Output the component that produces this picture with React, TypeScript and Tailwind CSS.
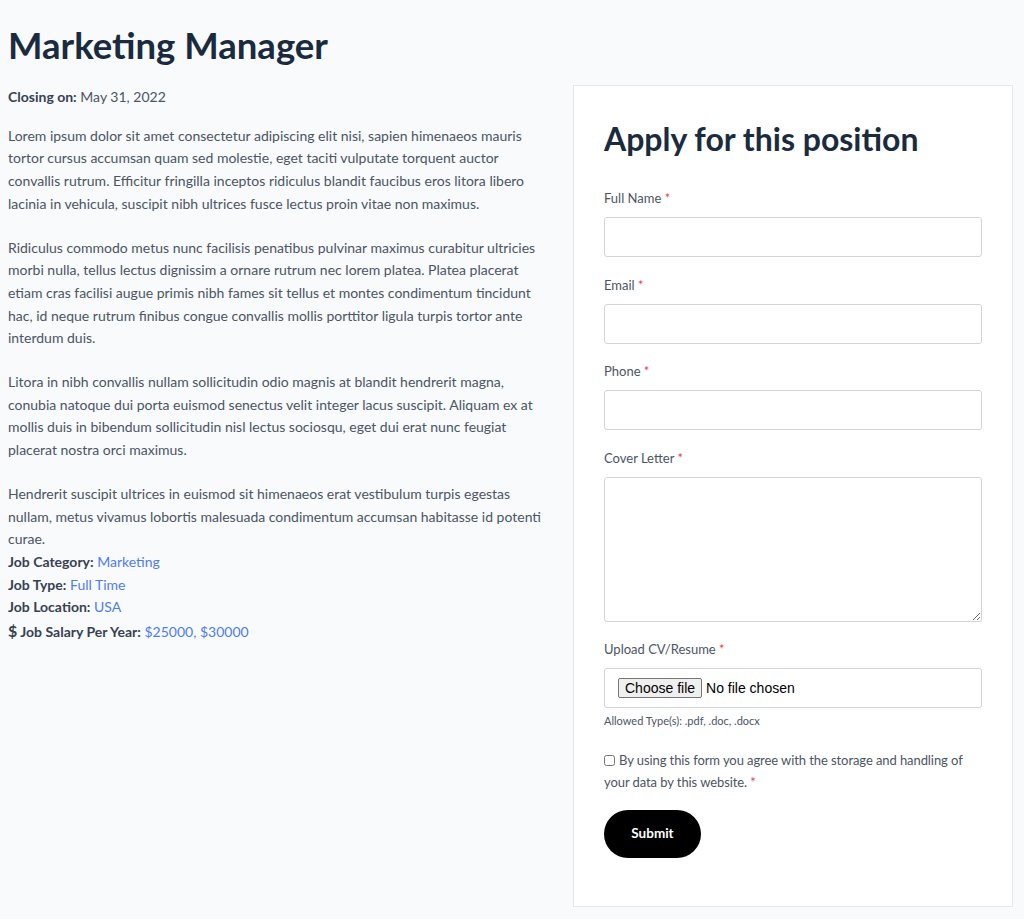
const font = { fontFamily: 'Lato, "Noto Sans", sans-serif' };

function Label({ text }: { text: string }) {
  return (
    <label className="block text-[13px] leading-[20px] text-[#4b5563] mb-[9px]">
      {text} <span className="text-[#e0454f]">*</span>
    </label>
  );
}

export default function App() {
  return (
    <div className="min-h-[919px] bg-[#f8fafc] px-2 pt-[22px]" style={font}>
      <h1 className="text-[36.5px] font-bold text-[#1a2b40] leading-[46px]">Marketing Manager</h1>
      <div className="flex gap-[30px] mt-[17px]">
        <div className="w-[535px] text-[14px] leading-[22.7px] text-[#4b5563]">
          <p className="mt-[1px]">
            <b className="text-[#374151]">Closing on:</b> May 31, 2022
          </p>
          <p className="mt-[16px]">
            Lorem ipsum dolor sit amet consectetur adipiscing elit nisi, sapien himenaeos mauris tortor cursus accumsan quam sed molestie, eget taciti vulputate torquent auctor convallis rutrum. Efficitur fringilla inceptos ridiculus blandit faucibus eros litora libero lacinia in vehicula, suscipit nibh ultrices fusce lectus proin vitae non maximus.
          </p>
          <p className="mt-[21px]">
            Ridiculus commodo metus nunc facilisis penatibus pulvinar maximus curabitur ultricies morbi nulla, tellus lectus dignissim a ornare rutrum nec lorem platea. Platea placerat etiam cras facilisi augue primis nibh fames sit tellus et montes condimentum tincidunt hac, id neque rutrum finibus congue convallis mollis porttitor ligula turpis tortor ante interdum duis.
          </p>
          <p className="mt-[21px]">
            Litora in nibh convallis nullam sollicitudin odio magnis at blandit hendrerit magna, conubia natoque dui porta euismod senectus velit integer lacus suscipit. Aliquam ex at mollis duis in bibendum sollicitudin nisl lectus sociosqu, eget dui erat nunc feugiat placerat nostra orci maximus.
          </p>
          <p className="mt-[21px]">
            Hendrerit suscipit ultrices in euismod sit himenaeos erat vestibulum turpis egestas nullam, metus vivamus lobortis malesuada condimentum accumsan habitasse id potenti curae.
          </p>
          <div className="text-[#374151]">
            <div><b>Job Category:</b> <a className="text-[#4f7cf0]">Marketing</a></div>
            <div><b>Job Type:</b> <a className="text-[#4f7cf0]">Full Time</a></div>
            <div><b>Job Location:</b> <a className="text-[#4f7cf0]">USA</a></div>
            <div className="mt-[1px]"><b><span className="text-[16px]">$</span> Job Salary Per Year:</b> <a className="text-[#4f7cf0]">$25000, $30000</a></div>
          </div>
        </div>
        <div className="w-[440px] mb-[11px] bg-white border border-[#e5e7eb] px-[30px] pt-[31px] pb-[48px]">
          <h2 className="text-[32px] font-bold text-[#1a2b40] leading-[44px]">Apply for this position</h2>
          <form className="mt-[27px]">
            <Label text="Full Name" />
            <input className="block w-full h-[40px] border border-[#d1d5db] rounded-[3px] bg-white" />
            <div className="mt-[18px]"><Label text="Email" /></div>
            <input className="block w-full h-[40px] border border-[#d1d5db] rounded-[3px] bg-white" />
            <div className="mt-[17px]"><Label text="Phone" /></div>
            <input className="block w-full h-[40px] border border-[#d1d5db] rounded-[3px] bg-white" />
            <div className="mt-[18px]"><Label text="Cover Letter" /></div>
            <textarea className="block w-full h-[145px] border border-[#d1d5db] rounded-[3px] bg-white" />
            <div className="mt-[17px]"><Label text="Upload CV/Resume" /></div>
            <div className="h-[40px] border border-[#d1d5db] rounded-[3px] bg-white flex items-center pl-[13px] text-[14px] text-black" style={{ fontFamily: 'Arial, "Liberation Sans", sans-serif' }}>
              <span className="border border-[#767676] bg-[#efefef] rounded-[2px] px-[6px] leading-[18px]">Choose file</span>
              <span className="ml-[4px]">No file chosen</span>
            </div>
            <p className="text-[11px] text-[#4b5563] mt-[5px]">Allowed Type(s): .pdf, .doc, .docx</p>
            <div className="mt-[19px] text-[13px] tracking-[-0.08px] leading-[22.5px] text-[#4b5563]">
              <input type="checkbox" className="w-[11px] h-[11px] mr-[4px] align-[-1px]" />
              By using this form you agree with the storage and handling of your data by this website. <span className="text-[#e0454f]">*</span>
            </div>
            <button type="button" className="mt-[16px] w-[97px] h-[48px] rounded-full bg-black text-white text-[13.5px] font-bold">Submit</button>
          </form>
        </div>
      </div>
    </div>
  );
}
